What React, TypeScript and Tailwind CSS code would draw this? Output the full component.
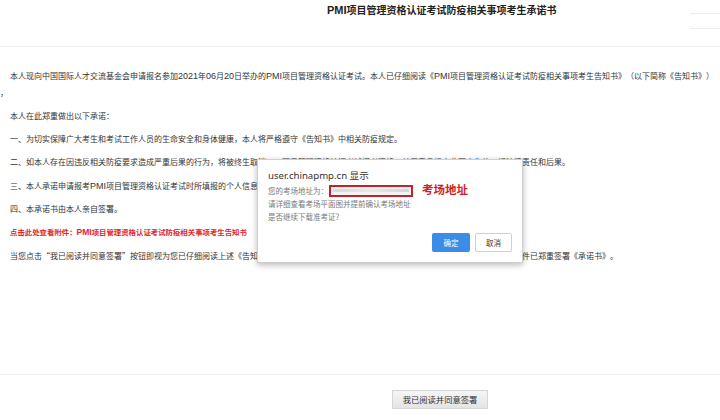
import React from "react";

const L = ({ children }: { children: React.ReactNode }) => (
  <span className="font-['Liberation_Sans',sans-serif] text-[9px] leading-none">{children}</span>
);

export default function App() {
  return (
    <div className="relative w-[720px] h-[420px] bg-white overflow-hidden flex flex-col font-['Noto_Sans_CJK_SC','Noto_Sans',sans-serif] text-[#333] [text-spacing-trim:space-all]">
      {/* header */}
      <div className="h-[47px] shrink-0 flex items-start border-b border-[#f0f0f0]">
        <div className="pl-[327px] pt-[3px] text-[10px] leading-[14px] font-bold text-[#222] whitespace-nowrap">
          <span className="font-['Liberation_Sans',sans-serif] text-[11px] leading-none">PMI</span>项目管理资格认证考试防疫相关事项考生承诺书
        </div>
        <div className="ml-auto mt-[13px] w-[30px] h-[16px] border-y border-[#eeeeee]" />
      </div>

      {/* content */}
      <div className="flex-1 pt-[19.5px] text-[8px] leading-[12px]">
        <p className="leading-[17px] mb-[9px] whitespace-nowrap indent-[10px]">
          本人现向中国国际人才交流基金会申请报名参加<L>2021</L>年<L>06</L>月<L>20</L>日举办的<L>PMI</L>项目管理资格认证考试。本人已仔细阅读《<L>PMI</L>项目管理资格认证考试防疫相关事项考生告知书》（以下简称《告知书》）
          <br />，
        </p>
        <p className="h-[12px] mb-[11.4px] whitespace-nowrap indent-[10px]">本人在此郑重做出以下承诺：</p>
        <p className="h-[12px] mb-[11.4px] whitespace-nowrap indent-[10px]">
          一、为切实保障广大考生和考试工作人员的生命安全和身体健康，本人将严格遵守《告知书》中相关防疫规定。
        </p>
        <p className="h-[12px] mb-[11.4px] whitespace-nowrap indent-[10px]">
          二、如本人存在因违反相关防疫要求造成严重后果的行为，将被终生取消<L>PMI</L>项目管理资格认证考试报考资格，并愿意承担由此而产生的一切法律责任和后果。
        </p>
        <p className="h-[12px] mb-[11.4px] whitespace-nowrap indent-[10px]">
          三、本人承诺申请报考<L>PMI</L>项目管理资格认证考试时所填报的个人信息真
        </p>
        <p className="h-[12px] mb-[11.4px] whitespace-nowrap indent-[10px]">四、本承诺书由本人亲自签署。</p>
        <p className="h-[12px] mb-[11.4px] whitespace-nowrap indent-[10px] font-bold text-[#e3262d] text-[7.4px]">
          点击此处查看附件：<span className="font-['Liberation_Sans',sans-serif] text-[8.5px] leading-none">PMI</span>项目管理资格认证考试防疫相关事项考生告知书
        </p>
        <p className="h-[12px] whitespace-nowrap indent-[10px]">
          当您点击“我已阅读并同意签署”按钮即视为您已仔细阅读上述《告知书》的全部内容，并同意遵守相关防疫规定，视为您以电子签名方式对本文件已郑重签署《承诺书》。
        </p>
      </div>

      {/* footer */}
      <div className="h-[46px] shrink-0 border-t border-[#f0f0f0] pt-[9px] pl-[392px]">
        <button className="w-[96px] h-[19px] bg-gradient-to-b from-[#f6f6f6] to-[#e4e4e4] border border-[#d6d6d6] text-[8.3px] leading-[17px] text-[#333] whitespace-nowrap">
          我已阅读并同意签署
        </button>
      </div>

      {/* alert dialog */}
      <div className="absolute left-[257px] top-[159px] w-[266px] h-[104px] bg-white border border-[#cfcfcf] shadow-[0_2px_6px_rgba(0,0,0,0.28)] flex flex-col pl-[10px] pr-[10px] pt-[10px] pb-[10px]">
        <div className="text-[9.6px] leading-[12px] text-[#333] whitespace-nowrap font-['Noto_Sans','Noto_Sans_CJK_SC',sans-serif]">
          user.chinapmp.cn 显示
        </div>
        <div className="mt-[2px] text-[7.5px] leading-[13px] text-[#7a7a7a] whitespace-nowrap">
          <div className="flex items-center">
            <span>您的考场地址为：</span>
            <span className="ml-[1px] w-[84px] h-[12px] border-2 border-[#c4222a] bg-[#f3f3f3] flex items-center px-[2px]">
              <span className="block w-full h-[3px] bg-gradient-to-r from-[#d8d8d8] via-[#e8e8e8] to-[#d4d4d4]" />
            </span>
          </div>
          <div>请详细查看考场平面图并提前确认考场地址</div>
          <div>是否继续下载准考证？</div>
        </div>
        <div className="mt-auto flex justify-end gap-[5px]">
          <button className="w-[38px] h-[19px] rounded-[2px] bg-[#3b8ce6] text-white text-[7.5px] leading-[19px]">确定</button>
          <button className="w-[37px] h-[19px] rounded-[2px] bg-white border border-[#d0d0d0] text-[#333] text-[7.5px] leading-[17px]">取消</button>
        </div>
        <span className="absolute left-[164px] top-[21px] text-[11.5px] leading-[16px] font-bold text-[#cc1f29] whitespace-nowrap">
          考场地址
        </span>
      </div>
    </div>
  );
}
